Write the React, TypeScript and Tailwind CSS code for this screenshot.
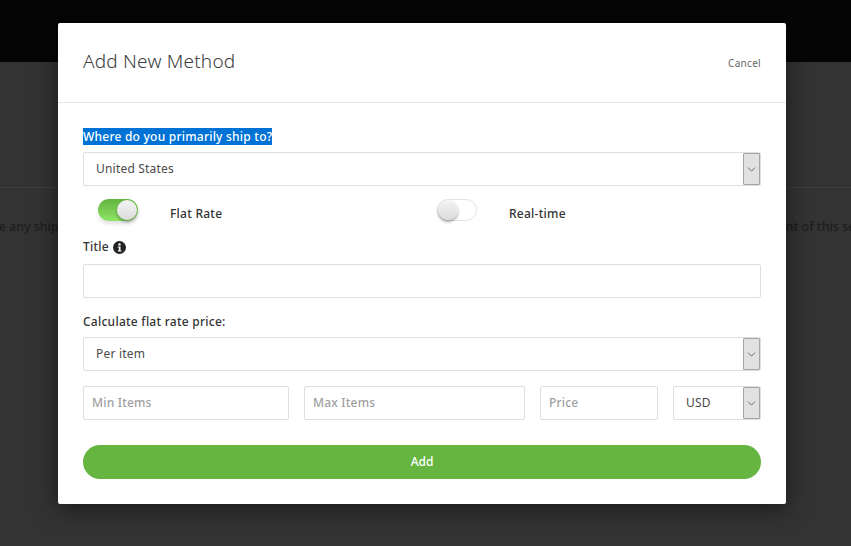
import React from 'react';
import { ChevronDown } from 'lucide-react';

const font = "font-['Noto_Sans','Open_Sans',sans-serif]";

const SelectBox = ({ value, className = '' }: { value: string; className?: string }) => (
  <div className={`flex h-[34px] items-stretch rounded-[2px] border border-[#dedede] bg-white ${className}`}>
    <div className="flex flex-1 items-center pl-3 text-[12px] tracking-[0.2px] text-[#4a4a4a]">{value}</div>
    <div className="flex w-[17px] items-center justify-center rounded-[1px] border border-[#a5a5a5] bg-[#e1e1e1]">
      <ChevronDown size={13} strokeWidth={1.25} className="text-[#333]" />
    </div>
  </div>
);

const Field = ({ placeholder = '', className = '' }: { placeholder?: string; className?: string }) => (
  <div className={`flex h-[34px] items-center rounded-[2px] border border-[#dedede] bg-white px-2 text-[12px] font-medium tracking-[0.2px] text-[#a0a0a0] ${className}`}>
    {placeholder}
  </div>
);

const Toggle = ({ on }: { on: boolean }) => (
  <div
    className={`relative h-[22px] w-[40px] rounded-full ${
      on ? 'bg-gradient-to-b from-[#63b33e] to-[#8ee666] shadow-[0_3px_4px_rgba(0,0,0,0.12)]' : 'border border-[#e4e4e4] bg-white'
    }`}
  >
    <div
      className={`absolute h-[20px] w-[20px] rounded-full bg-gradient-to-b from-[#f4f4f4] to-[#dcdcdc] shadow-[0_2px_3px_rgba(0,0,0,0.35)] ${
        on ? 'right-[1px] top-[1px]' : 'left-0 top-0'
      }`}
    />
  </div>
);

const InfoDot = () => (
  <svg width="13" height="13" viewBox="0 0 13 13">
    <circle cx="6.5" cy="6.5" r="6.5" fill="#222" />
    <circle cx="6.5" cy="3.4" r="1.2" fill="#fff" />
    <path d="M4.8 5.4h2.7v4h1v1.2H4.8V9.4h1V6.6h-1z" fill="#fff" />
  </svg>
);

export default function App() {
  return (
    <div className={`relative h-[546px] w-[851px] overflow-hidden bg-[#333333] ${font}`}>
      {/* page behind the overlay */}
      <div className="h-[62px] bg-[#050505]" />
      <div className="mt-[125px] border-t border-[#3d3d3d] pt-[30px]">
        <p className="-ml-[82px] whitespace-nowrap text-[12.45px] font-medium text-[#1d1d1d]">
          You don't have any shipping methods set up for your store yet. Add a new method so that customers can choose how to pay for delivery at the point of this section
        </p>
      </div>

      {/* modal */}
      <div className="absolute left-[58px] top-[23px] h-[481px] w-[728px] rounded-[2px] bg-white shadow-[0_4px_24px_rgba(0,0,0,0.55)]">
        <div className="flex h-[80px] items-center justify-between border-b border-[#e4e4e4] pb-[4px] pl-[25px] pr-[25px]">
          <h2 className="mt-[1px] text-[19px] font-light tracking-[0.2px] text-[#3d3d3d]">Add New Method</h2>
          <button className="mt-[6px] text-[10px] tracking-[0.3px] text-[#666]">Cancel</button>
        </div>

        <div className="px-[25px] pt-[26px]">
          <label className="block h-[15px] text-[12px] leading-[15px] font-medium tracking-[0.23px] text-[#333]">
            <span className="bg-[#0072d6] text-white">Where do you primarily ship to?</span>
          </label>
          <SelectBox value="United States" className="mt-[8px]" />

          <div className="mt-[13px] flex h-[22px] items-start">
            <div className="flex w-[339px] items-start pl-[15px]">
              <Toggle on />
              <span className="ml-[32px] mt-[6px] text-[12px] font-medium tracking-[0.25px] text-[#333]">Flat Rate</span>
            </div>
            <div className="flex items-start pl-[15px]">
              <Toggle on={false} />
              <span className="ml-[32px] mt-[6px] text-[12px] font-medium tracking-[0.25px] text-[#333]">Real-time</span>
            </div>
          </div>

          <div className="mt-[17px] flex h-[18px] items-center gap-[4px] text-[12px] font-medium tracking-[0.25px] text-[#333]">
            Title
            <InfoDot />
          </div>
          <Field className="mt-[8px]" />

          <div className="mt-[16px] h-[15px] text-[12px] leading-[15px] font-medium tracking-[0.25px] text-[#333]">Calculate flat rate price:</div>
          <SelectBox value="Per item" className="mt-[8px]" />

          <div className="mt-[15px] flex gap-[15px]">
            <Field placeholder="Min Items" className="w-[206px]" />
            <Field placeholder="Max Items" className="w-[221px]" />
            <Field placeholder="Price" className="w-[118px]" />
            <SelectBox value="USD" className="w-[88px]" />
          </div>

          <button className="mt-[25px] h-[34px] w-full rounded-full bg-[#65b540] text-[12px] font-medium text-white">Add</button>
        </div>
      </div>
    </div>
  );
}
